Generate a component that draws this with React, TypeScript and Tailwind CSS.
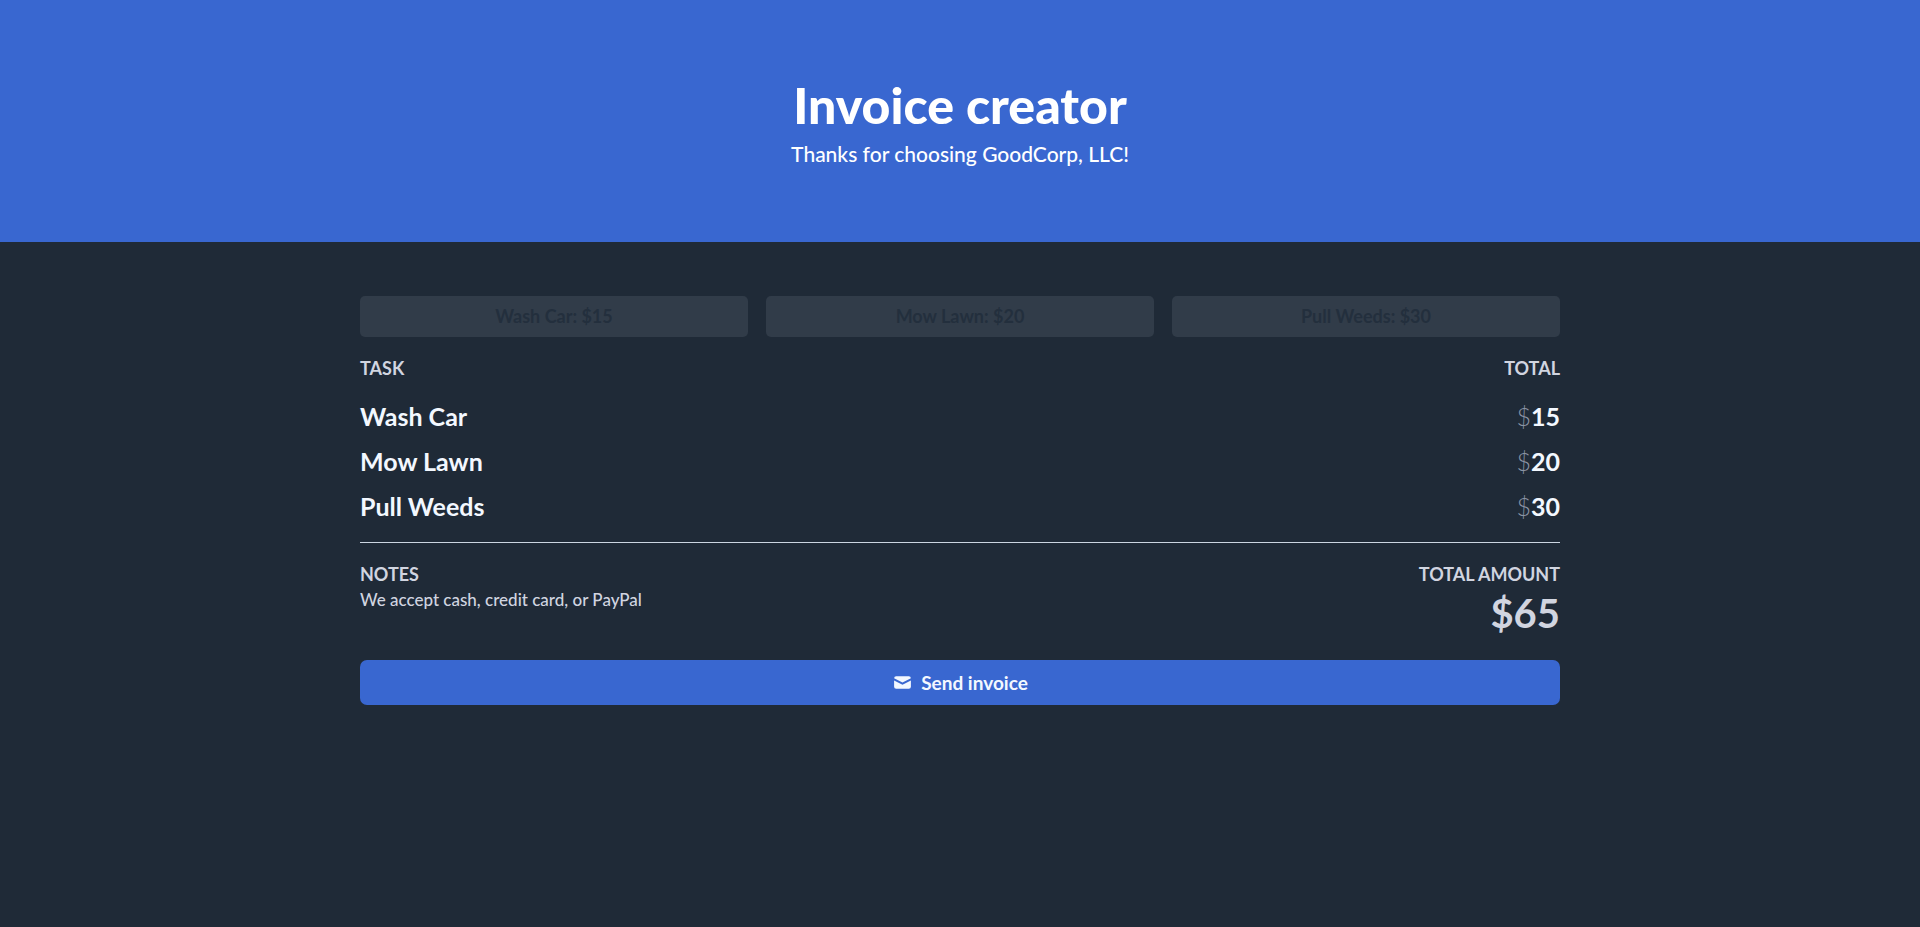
import { HiMail } from "react-icons/hi";

const tasks = [
  { name: "Wash Car", price: 15 },
  { name: "Mow Lawn", price: 20 },
  { name: "Pull Weeds", price: 30 },
];

const total = tasks.reduce((sum, task) => sum + task.price, 0);

export default function App() {
  return (
    <div className="min-h-screen bg-[#1f2a37] font-['Lato','Noto_Sans',sans-serif] text-[#d1d5e0]">
      <header className="bg-[#3967d0] px-6 py-[72px] text-center text-white">
        <h1 className="text-[50px] leading-[66px] font-black">Invoice creator</h1>
        <p className="text-[21px] leading-8 font-medium">Thanks for choosing GoodCorp, LLC!</p>
      </header>

      <main className="mx-auto max-w-[1248px] px-6 pt-[54px]">
        <div className="grid grid-cols-3 gap-[18px]">
          {tasks.map((task) => (
            <button
              key={task.name}
              type="button"
              disabled
              className="rounded-[5px] bg-[#313c49] py-2 text-[18px] leading-[25px] font-bold text-[#232f3d]"
            >
              {task.name}: ${task.price}
            </button>
          ))}
        </div>

        <table className="mt-[18px] w-full border-b border-[#cbd5e1]">
          <thead>
            <tr className="text-[18px] leading-[27px] font-bold uppercase">
              <th scope="col" className="pb-3 text-left">Task</th>
              <th scope="col" className="pb-3 text-right">Total</th>
            </tr>
          </thead>
          <tbody>
            {tasks.map((task) => (
              <tr key={task.name} className="text-[25px] leading-[45px] font-bold text-[#f3f8ff]">
                <td>{task.name}</td>
                <td className="text-right">
                  <span className="font-light text-[#8b94a5]">$</span>
                  {task.price}
                </td>
              </tr>
            ))}
            <tr>
              <td colSpan={2} className="h-[13px]" />
            </tr>
          </tbody>
        </table>

        <section className="mt-[18px] flex justify-between">
          <div>
            <h2 className="text-[18px] leading-[27px] font-bold uppercase">Notes</h2>
            <p className="text-[17px] leading-6 font-medium">We accept cash, credit card, or PayPal</p>
          </div>
          <div className="text-right">
            <h2 className="text-[18px] leading-[27px] font-bold uppercase">Total amount</h2>
            <p className="text-[40px] leading-[50px] font-bold">${total}</p>
          </div>
        </section>

        <button
          type="button"
          className="mt-[22px] flex w-full items-center justify-center gap-2 rounded-[7px] bg-[#3967d0] py-[9px] text-[19px] leading-[27px] font-bold text-[#f3f8ff]"
        >
          <HiMail className="size-[21px]" aria-hidden="true" />
          Send invoice
        </button>
      </main>
    </div>
  );
}
